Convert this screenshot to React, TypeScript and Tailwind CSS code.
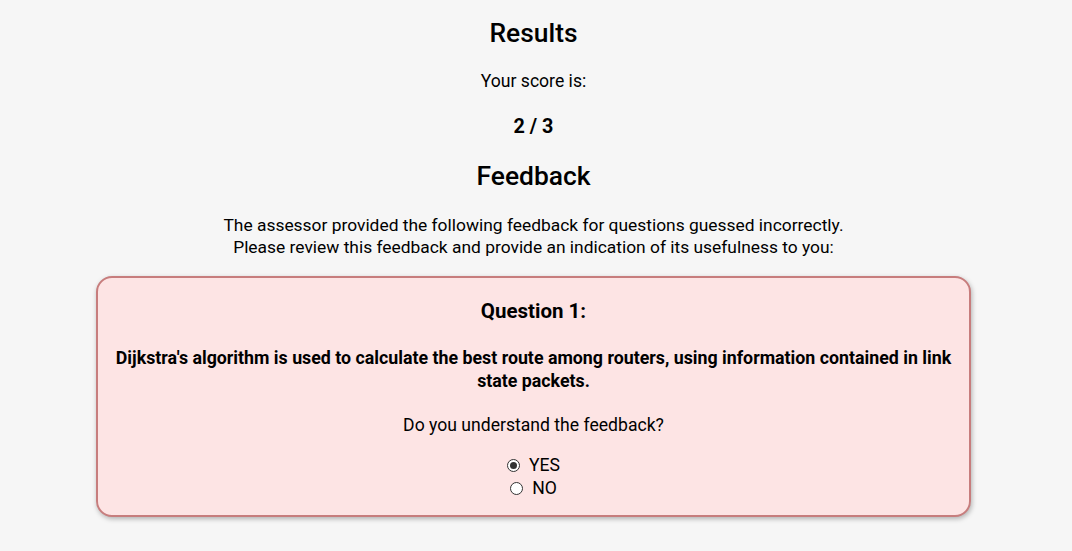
import { useState } from 'react';

function Radio({ label, checked, onSelect }: { label: string; checked: boolean; onSelect: () => void }) {
  return (
    <label className="flex items-center justify-center gap-[9px] leading-[23px] cursor-pointer" onClick={onSelect}>
      <span className="w-[13px] h-[13px] rounded-full border border-[#333] bg-white flex items-center justify-center">
        {checked && <span className="w-[7px] h-[7px] rounded-full bg-[#333]" />}
      </span>
      <span>{label}</span>
    </label>
  );
}

export default function App() {
  const [answer, setAnswer] = useState('yes');

  return (
    <div className="min-h-screen bg-[#f6f6f6] text-black" style={{ fontFamily: 'Roboto, "Liberation Sans", sans-serif' }}>
      <div className="w-[1067px] flex flex-col items-center text-center pt-[17px]">
        <h2 className="text-[26.4px] font-medium leading-8">Results</h2>
        <p className="mt-5 text-[17.6px] leading-6">Your score is:</p>
        <p className="mt-5 text-[19.8px] font-bold leading-7">2 / 3</p>
        <h2 className="mt-[19px] text-[26.4px] font-medium leading-8">Feedback</h2>
        <p className="mt-[22px] text-[17.4px] leading-[22px]">
          The assessor provided the following feedback for questions guessed incorrectly.
          <br />
          Please review this feedback and provide an indication of its usefulness to you:
        </p>

        {/* Question card */}
        <div className="mt-[18px] w-[875px] rounded-[16px] border-2 border-[#c77d7d] bg-[#fde4e4] shadow-[1px_2px_5px_rgba(0,0,0,0.28)] px-[15px] pt-[19px] pb-[15px]">
          <h3 className="text-[20.5px] font-bold leading-7">Question 1:</h3>
          <p className="mt-[21px] text-[17.8px] font-bold leading-[23px]">
            Dijkstra's algorithm is used to calculate the best route among routers, using information contained in link state packets.
          </p>
          <p className="mt-[21px] text-[17.6px] leading-6">Do you understand the feedback?</p>
          <div className="mt-[17px] flex flex-col items-center text-[17.6px]">
            <Radio label="YES" checked={answer === 'yes'} onSelect={() => setAnswer('yes')} />
            <Radio label="NO" checked={answer === 'no'} onSelect={() => setAnswer('no')} />
          </div>
        </div>
      </div>
    </div>
  );
}
